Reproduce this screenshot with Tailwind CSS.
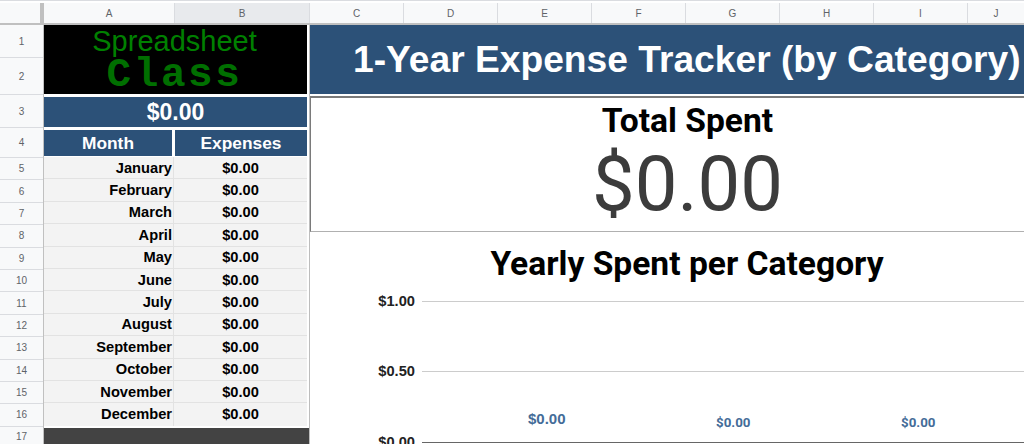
<!doctype html>
<html>
<head>
<meta charset="utf-8">
<script src="https://cdn.jsdelivr.net/npm/@tailwindcss/browser@4"></script>
</head>
<body class="bg-white overflow-hidden font-['Liberation_Sans',Arial,sans-serif]">
<div class="w-[1024px] h-[444px] overflow-hidden pt-[2px] border-t border-[#dadce0] box-border">
  <!-- column header -->
  <div class="flex h-[22px] bg-[#f8f9fa] border-b-2 border-[#c0c0c0] text-[10px] text-[#5f6368]">
    <div class="w-[44px] shrink-0 border-r-4 border-[#c0c0c0]"></div>
    <div class="w-[131px] shrink-0 flex items-center justify-center border-r border-[#dadce0]">A</div>
    <div class="w-[135px] shrink-0 flex items-center justify-center border-r border-[#dadce0] bg-[#e8eaed]">B</div>
    <div class="w-[94px] shrink-0 flex items-center justify-center border-r border-[#dadce0]">C</div>
    <div class="w-[94px] shrink-0 flex items-center justify-center border-r border-[#dadce0]">D</div>
    <div class="w-[94px] shrink-0 flex items-center justify-center border-r border-[#dadce0]">E</div>
    <div class="w-[94px] shrink-0 flex items-center justify-center border-r border-[#dadce0]">F</div>
    <div class="w-[94px] shrink-0 flex items-center justify-center border-r border-[#dadce0]">G</div>
    <div class="w-[94px] shrink-0 flex items-center justify-center border-r border-[#dadce0]">H</div>
    <div class="w-[94px] shrink-0 flex items-center justify-center border-r border-[#dadce0]">I</div>
    <div class="w-[56px] shrink-0 flex items-center justify-center">J</div>
  </div>
  <div class="flex">
    <!-- row header -->
    <div class="w-[44px] shrink-0 bg-[#f8f9fa] border-r border-[#c0c0c0] text-[10px] text-[#5f6368]">
      <div class="h-[33px] flex items-center justify-center border-b border-[#dadce0]">1</div>
      <div class="h-[37px] flex items-center justify-center border-b border-[#dadce0]">2</div>
      <div class="h-[33px] flex items-center justify-center border-b border-[#dadce0]">3</div>
      <div class="h-[30px] flex items-center justify-center border-b border-[#dadce0]">4</div>
      <div class="h-[22.4px] flex items-center justify-center border-b border-[#dadce0]">5</div>
      <div class="h-[22.4px] flex items-center justify-center border-b border-[#dadce0]">6</div>
      <div class="h-[22.4px] flex items-center justify-center border-b border-[#dadce0]">7</div>
      <div class="h-[22.4px] flex items-center justify-center border-b border-[#dadce0]">8</div>
      <div class="h-[22.4px] flex items-center justify-center border-b border-[#dadce0]">9</div>
      <div class="h-[22.4px] flex items-center justify-center border-b border-[#dadce0]">10</div>
      <div class="h-[22.4px] flex items-center justify-center border-b border-[#dadce0]">11</div>
      <div class="h-[22.4px] flex items-center justify-center border-b border-[#dadce0]">12</div>
      <div class="h-[22.4px] flex items-center justify-center border-b border-[#dadce0]">13</div>
      <div class="h-[22.4px] flex items-center justify-center border-b border-[#dadce0]">14</div>
      <div class="h-[22.4px] flex items-center justify-center border-b border-[#dadce0]">15</div>
      <div class="h-[22.4px] flex items-center justify-center border-b border-[#dadce0]">16</div>
      <div class="h-[20px] flex items-center justify-center">17</div>
    </div>
    <!-- left table -->
    <div class="w-[266px] shrink-0 border-r border-[#bdbdbd] box-border">
      <div class="h-[69px] mr-[2px] pr-[2px] bg-black flex flex-col items-center">
        <div class="h-[33px] text-[29px] leading-[32px] text-[#008000]">Spreadsheet</div>
        <div class="mt-[1px] text-[41px] leading-[33px] font-bold tracking-[2.6px] text-[#006f00] font-['Liberation_Mono',monospace]">Class</div>
      </div>
      <div class="h-[30px] mt-[3px] mr-[2px] bg-[#2c5178] text-white font-bold text-[23px] flex items-center justify-center">$0.00</div>
      <div class="flex h-[26px] mt-[3px] mr-[2px] gap-[3px] text-white font-bold text-[17.33px]">
        <div class="w-[128px] pt-[2px] bg-[#2c5178] flex items-center justify-center">Month</div>
        <div class="flex-1 pt-[2px] bg-[#2c5178] flex items-center justify-center">Expenses</div>
      </div>
      <div class="mr-[2px] mt-[1px] text-[14.67px] font-bold text-black bg-[#f3f3f3]">
        <div class="h-[22.4px] flex border-b border-[#e2e2e2]"><div class="w-[130px] border-r border-[#e2e2e2] flex items-center justify-end pr-[1px]">January</div><div class="flex-1 flex items-center justify-center">$0.00</div></div>
        <div class="h-[22.4px] flex border-b border-[#e2e2e2]"><div class="w-[130px] border-r border-[#e2e2e2] flex items-center justify-end pr-[1px]">February</div><div class="flex-1 flex items-center justify-center">$0.00</div></div>
        <div class="h-[22.4px] flex border-b border-[#e2e2e2]"><div class="w-[130px] border-r border-[#e2e2e2] flex items-center justify-end pr-[1px]">March</div><div class="flex-1 flex items-center justify-center">$0.00</div></div>
        <div class="h-[22.4px] flex border-b border-[#e2e2e2]"><div class="w-[130px] border-r border-[#e2e2e2] flex items-center justify-end pr-[1px]">April</div><div class="flex-1 flex items-center justify-center">$0.00</div></div>
        <div class="h-[22.4px] flex border-b border-[#e2e2e2]"><div class="w-[130px] border-r border-[#e2e2e2] flex items-center justify-end pr-[1px]">May</div><div class="flex-1 flex items-center justify-center">$0.00</div></div>
        <div class="h-[22.4px] flex border-b border-[#e2e2e2]"><div class="w-[130px] border-r border-[#e2e2e2] flex items-center justify-end pr-[1px]">June</div><div class="flex-1 flex items-center justify-center">$0.00</div></div>
        <div class="h-[22.4px] flex border-b border-[#e2e2e2]"><div class="w-[130px] border-r border-[#e2e2e2] flex items-center justify-end pr-[1px]">July</div><div class="flex-1 flex items-center justify-center">$0.00</div></div>
        <div class="h-[22.4px] flex border-b border-[#e2e2e2]"><div class="w-[130px] border-r border-[#e2e2e2] flex items-center justify-end pr-[1px]">August</div><div class="flex-1 flex items-center justify-center">$0.00</div></div>
        <div class="h-[22.4px] flex border-b border-[#e2e2e2]"><div class="w-[130px] border-r border-[#e2e2e2] flex items-center justify-end pr-[1px]">September</div><div class="flex-1 flex items-center justify-center">$0.00</div></div>
        <div class="h-[22.4px] flex border-b border-[#e2e2e2]"><div class="w-[130px] border-r border-[#e2e2e2] flex items-center justify-end pr-[1px]">October</div><div class="flex-1 flex items-center justify-center">$0.00</div></div>
        <div class="h-[22.4px] flex border-b border-[#e2e2e2]"><div class="w-[130px] border-r border-[#e2e2e2] flex items-center justify-end pr-[1px]">November</div><div class="flex-1 flex items-center justify-center">$0.00</div></div>
        <div class="h-[22.4px] flex"><div class="w-[130px] border-r border-[#e2e2e2] flex items-center justify-end pr-[1px]">December</div><div class="flex-1 flex items-center justify-center">$0.00</div></div>
      </div>
      <div class="h-[20px] mt-[2px] bg-[#434343]"></div>
    </div>
    <!-- right -->
    <div class="w-[714px] shrink-0 overflow-hidden">
      <div class="h-[69px] bg-[#2c5178] text-white font-bold text-[37.2px] flex items-center pl-[43px] whitespace-nowrap">1-Year Expense Tracker (by Category)</div>
      <div class="h-[136px] mt-[2px] pt-[2px] border-t-2 border-l border-b border-[#7a7a7a] border-b-[#b0b0b0] font-['Roboto',sans-serif]">
        <div class="w-[753px] flex flex-col items-center">
          <div class="text-[33.6px] leading-[42px] font-bold text-black">Total Spent</div>
          <div class="text-[76px] leading-[84px] text-[#3c3c3c]">$0.00</div>
        </div>
      </div>
      <div class="w-[754px] mt-[12px] text-center text-[33.6px] leading-[40px] font-bold text-black font-['Roboto',sans-serif]">Yearly Spent per Category</div>
      <!-- chart -->
      <div class="relative mt-[7px] text-[14.67px] font-bold text-[#222222]">
        <div class="flex items-center h-[20px]">
          <div class="w-[105px] text-right">$1.00</div>
          <div class="flex-1 ml-[7px] h-px bg-[#cccccc]"></div>
        </div>
        <div class="flex items-center h-[20px] mt-[50px]">
          <div class="w-[105px] text-right">$0.50</div>
          <div class="flex-1 ml-[7px] h-px bg-[#cccccc]"></div>
        </div>
        <div class="flex items-center h-[20px] mt-[51px]">
          <div class="w-[105px] text-right">$0.00</div>
          <div class="flex-1 ml-[7px] h-px bg-[#666666]"></div>
        </div>
        <div class="absolute left-[218px] top-[117px] text-[15px] text-[#446c98]">$0.00</div>
        <div class="absolute left-[406px] top-[122px] text-[13.33px] text-[#446c98] font-['Roboto',sans-serif]">$0.00</div>
        <div class="absolute left-[591px] top-[122px] text-[13.33px] text-[#446c98] font-['Roboto',sans-serif]">$0.00</div>
      </div>
    </div>
  </div>
</div>
</body>
</html>
